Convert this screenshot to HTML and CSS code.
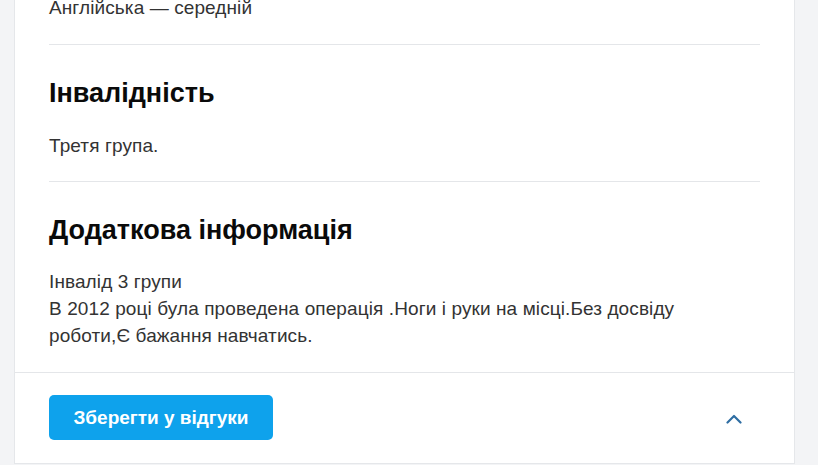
FILE: index.html
```html
<!DOCTYPE html>
<html lang="uk">
<head>
<meta charset="utf-8">
<title>Резюме</title>
<link rel="stylesheet" href="styles.css">
</head>
<body>
<div class="page">
  <div class="card">
    <section class="section section-first">
      <p class="text">Англійська — середній</p>
    </section>
    <section class="section">
      <h2 class="title">Інвалідність</h2>
      <p class="text">Третя група.</p>
    </section>
    <section class="section section-last">
      <h2 class="title title-tight">Додаткова інформація</h2>
      <p class="text">Інвалід 3 групи<br>В 2012 році була проведена операція .Ноги і руки на місці.Без досвіду роботи,Є бажання навчатись.</p>
    </section>
    <footer class="footer">
      <button class="btn" type="button">Зберегти у відгуки</button>
      <span class="chevron" aria-hidden="true">
        <svg width="16" height="10" viewBox="0 0 16 10"><path d="M1.5 8.5 L8 2 L14.5 8.5" fill="none" stroke="#2f6ea3" stroke-width="2.2" stroke-linecap="round" stroke-linejoin="round"/></svg>
      </span>
    </footer>
  </div>
</div>
</body>
</html>
```
FILE: styles.css
```css
html, body {
  margin: 0;
  padding: 0;
}
body {
  background: #f3f4f6;
  font-family: "Liberation Sans", Arial, sans-serif;
  color: #333;
  overflow: hidden;
}
.page {
  padding-left: 14px;
  width: 781px;
}
.card {
  background: #fff;
  border: 1px solid #e5e7ea;
  border-top: none;
  margin-top: -6px;
}
.section {
  margin: 0 34px;
  border-bottom: 1px solid #e4e6e9;
  padding: 32px 0 22px;
}
.section-first {
  padding: 0 0 23px;
}
.section-last {
  border-bottom: none;
  padding-bottom: 23px;
}
.title {
  margin: 0 0 23px;
  font-size: 27px;
  line-height: 32px;
  font-weight: bold;
  color: #0a0a0a;
}
.title-tight {
  margin-bottom: 22px;
}
.text {
  margin: 0;
  max-width: 680px;
  font-size: 19px;
  line-height: 27px;
  letter-spacing: 0.1px;
  color: #333;
}
.footer {
  border-top: 1px solid #e4e6e9;
  padding: 22px 52px 23px 34px;
  display: flex;
  align-items: center;
  justify-content: space-between;
}
.btn {
  height: 45px;
  width: 224px;
  border: none;
  border-radius: 5px;
  background: #0ea2ec;
  color: #fff;
  font-family: "Liberation Sans", Arial, sans-serif;
  font-weight: bold;
  font-size: 19px;
  padding: 0;
}
.chevron {
  display: flex;
  width: 16px;
  height: 10px;
  margin-top: 2px;
}
```
